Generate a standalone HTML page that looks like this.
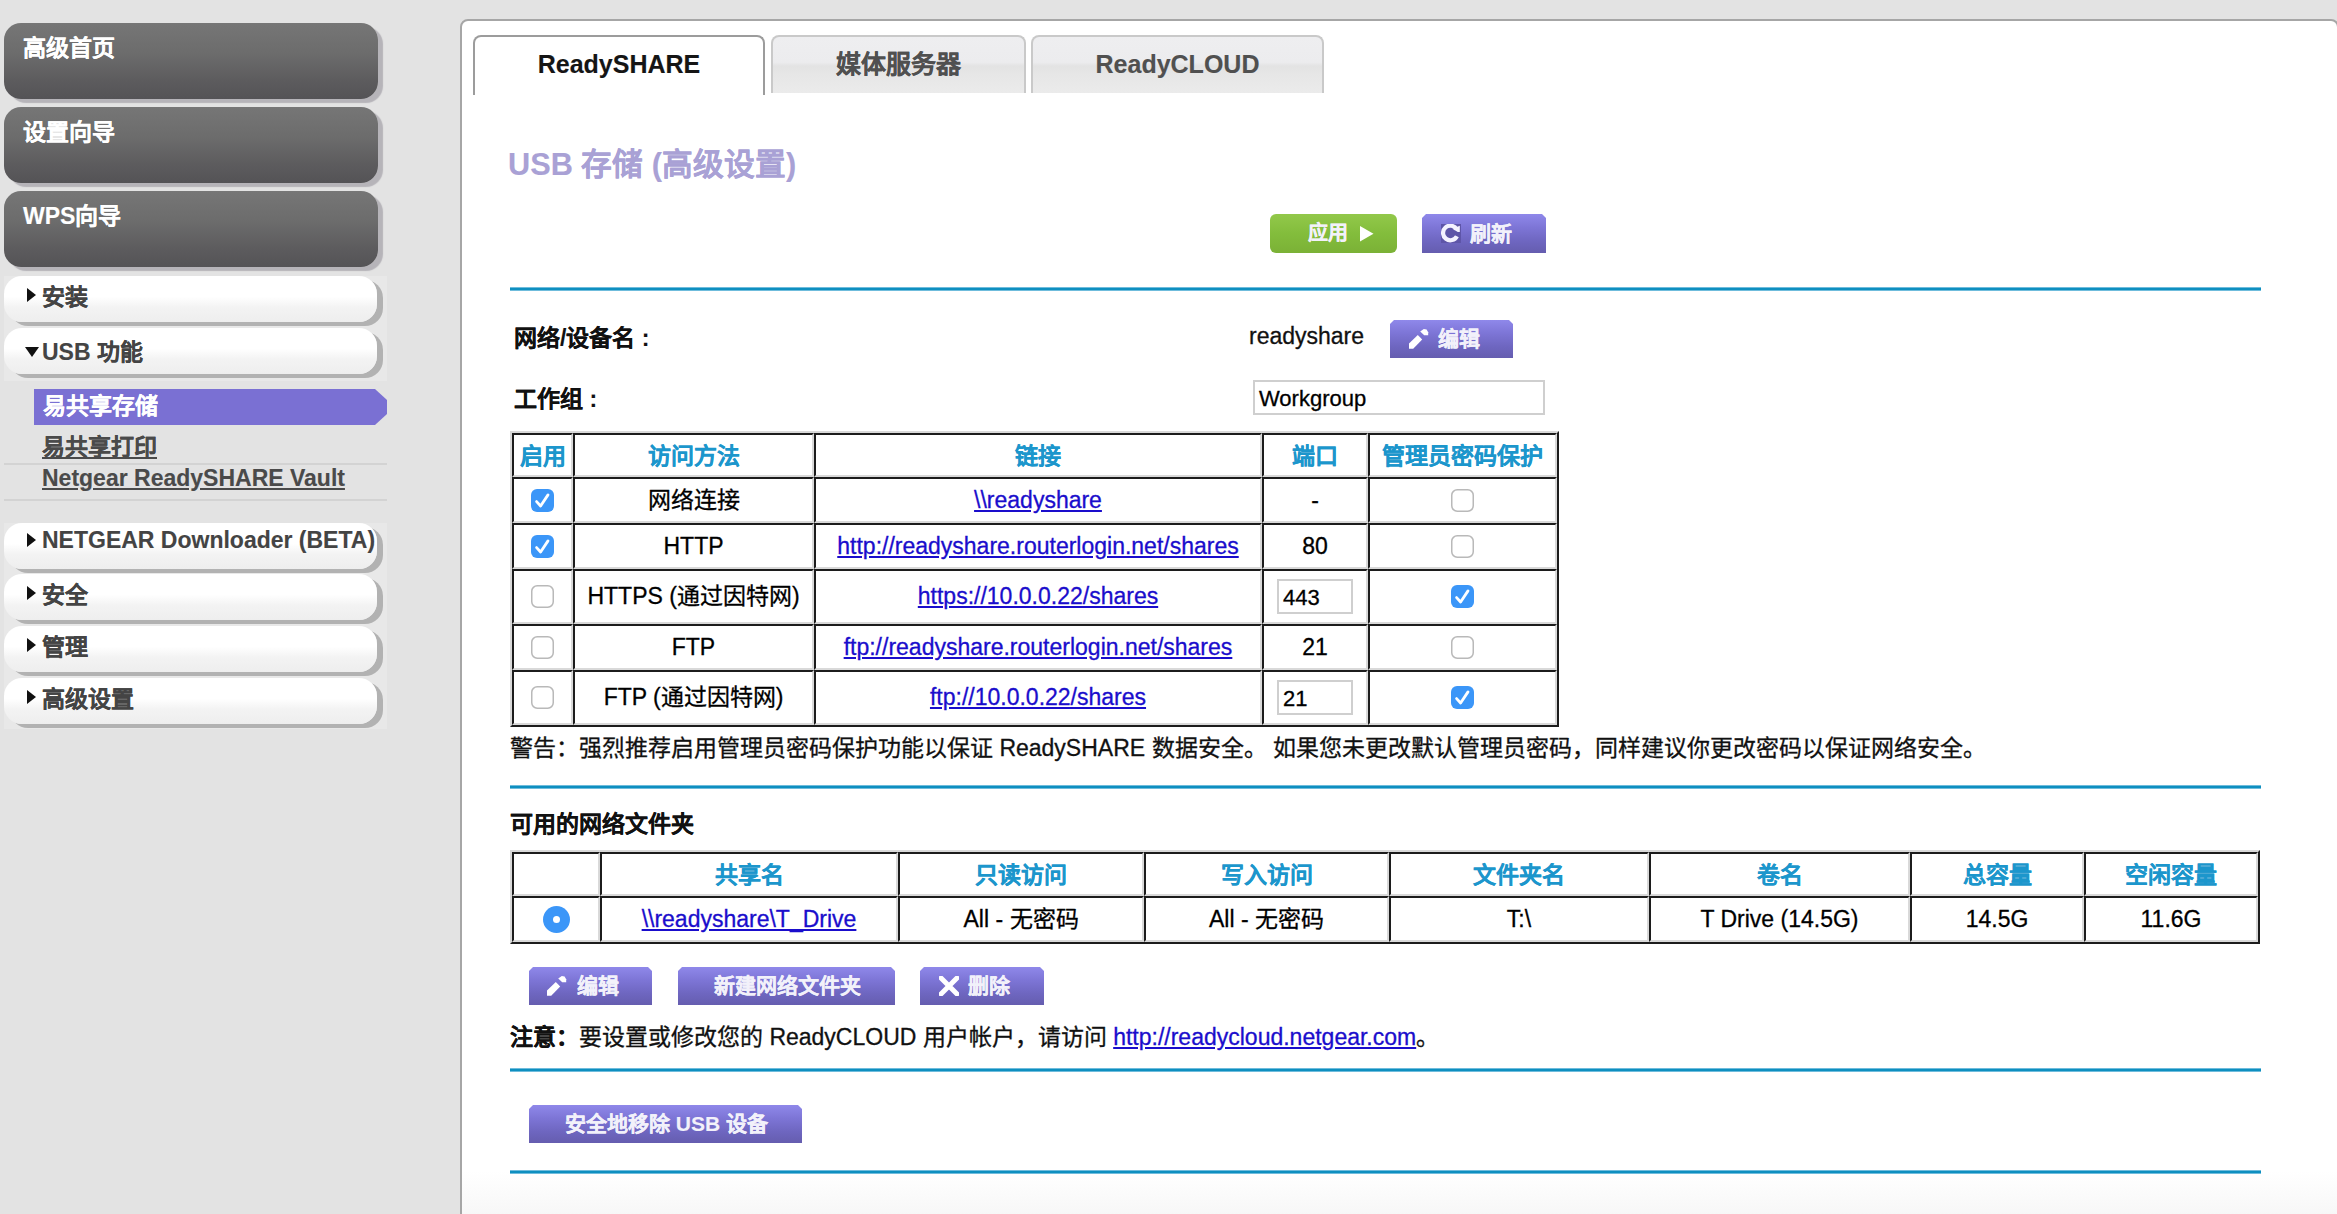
<!DOCTYPE html>
<html lang="zh-CN"><head><meta charset="utf-8">
<style>
*{box-sizing:border-box;margin:0;padding:0}
html,body{width:2337px;height:1214px;overflow:hidden;background:#e3e3e3;font-family:"Liberation Sans",sans-serif;}
body *{-webkit-text-stroke:0.3px currentColor}
.dk *,.lt *,.sub,.tab,.btn *,th,b,.a[style*="font-weight:bold"]{-webkit-text-stroke:0.12px currentColor}
.a{position:absolute;white-space:nowrap}
.dk{position:absolute;left:4px;width:374px;height:76px;border-radius:17px;background:linear-gradient(#767676 0%,#6c6c6c 40%,#5d5c5e 75%,#545356 100%);box-shadow:5px 4px 1px #b6b4b9;color:#fff;font-weight:bold;font-size:23px;}
.dk span{position:absolute;left:19px;top:6px;}
.lbg{position:absolute;left:4px;width:383px;background:#e8e8e8}
.lt{position:absolute;left:4px;width:373px;height:46px;border-radius:18px;background:linear-gradient(#fff 0%,#fff 45%,#f3f3f3 68%,#eeeeee 100%);box-shadow:6px 4px 0 #b2b2b2;color:#444;font-weight:bold;font-size:23px;}
.lt span{position:absolute;left:38px;top:2px;white-space:nowrap}
.tri{position:absolute;left:23px;top:12px;width:0;height:0;border-top:7px solid transparent;border-bottom:7px solid transparent;border-left:9px solid #111}
.trid{position:absolute;left:21px;top:19px;width:0;height:0;border-left:7px solid transparent;border-right:7px solid transparent;border-top:10px solid #111}
.sub{position:absolute;left:42px;color:#4a4a4a;font-weight:bold;font-size:23px;text-decoration:underline;white-space:nowrap}
.sep{position:absolute;left:4px;width:383px;height:2px;background:#d3d3d3}
#panel{position:absolute;left:460px;top:19px;width:1879px;height:1300px;background:linear-gradient(#fff 0,#fff 1150px,#f7f7f7 1195px);border:2px solid #a6a6a6;border-radius:8px}
.tab{position:absolute;top:35px;border:2px solid #c9c9c9;border-bottom:none;border-radius:8px 8px 0 0;font-weight:bold;font-size:25px;text-align:center;line-height:54px;background:linear-gradient(#eeeef0 0%,#ececee 45%,#e3e3e3 52%,#e6e6e6 65%,#ebebeb 100%);color:#505050}
.bl{position:absolute;left:510px;width:1751px;height:4px;background:linear-gradient(#6fbcdc 0,#6fbcdc 25%,#0e8fc0 25%,#0e8fc0 75%,#6fbcdc 75%)}
.btn{position:absolute;height:38px;color:#f2f1fa;font-weight:bold;font-size:21px;background:linear-gradient(#8f88ea 0%,#7d75d6 35%,#6e66c0 70%,#655daf 100%);clip-path:polygon(0 4px,4px 0,calc(100% - 4px) 0,100% 4px,100% 100%,0 100%)}
.btn span{position:absolute;top:2px}
.btng{background:linear-gradient(#92c84a 0%,#83bd3c 50%,#7bb136 100%);border-radius:6px;clip-path:none}
table.t{position:absolute;border-collapse:separate;border-spacing:0;border:2px solid;border-color:#d9d9d9 #1c1c1c #1c1c1c #d9d9d9;table-layout:fixed}
table.t td,table.t th{border:2px solid;border-color:#1c1c1c #d9d9d9 #d9d9d9 #1c1c1c;text-align:center;font-size:23px;line-height:26px;padding:0 0 3px 0;vertical-align:middle}
table.t td{color:#000;font-weight:normal;padding-bottom:1px}
table.t th{color:#1c96cc;font-weight:bold;padding-bottom:0;padding-top:2px}
a.lk{color:#1a0dcc;text-decoration:underline}
.cb{display:inline-block;width:23px;height:23px;vertical-align:middle;position:relative;top:-1px}
.rad{display:inline-block;width:27px;height:27px;border-radius:50%;background:#3b96f8;position:relative;vertical-align:middle}
.rad:after{content:"";position:absolute;left:10px;top:10px;width:7px;height:7px;border-radius:50%;background:#fff}
.inp{position:absolute;border:2px solid #cfcfcf;background:#fff;font-size:22px;color:#000}
</style></head><body>
<div class="dk" style="top:23px"><span>高级首页</span></div>
<div class="dk" style="top:107px"><span>设置向导</span></div>
<div class="dk" style="top:191px"><span>WPS向导</span></div>

<div class="lbg" style="top:276px;height:105px"></div>
<div class="lt" style="top:276px"><i class="tri"></i><span>安装</span></div>
<div class="lt" style="top:328px"><i class="trid"></i><span style="top:5px">USB 功能</span></div>

<div class="a" style="left:34px;top:389px;width:353px;height:36px;background:#7a70d3;clip-path:polygon(0 0,341px 0,353px 11px,353px 25px,341px 36px,0 36px)"></div>
<div class="a" style="left:43px;top:387px;color:#fff;font-weight:bold;font-size:23px">易共享存储</div>
<div class="sub" style="top:428px">易共享打印</div>
<div class="sep" style="top:463px"></div>
<div class="sub" style="top:465px">Netgear ReadySHARE Vault</div>
<div class="sep" style="top:499px"></div>

<div class="lbg" style="top:523px;height:206px"></div>
<div class="lt" style="top:523px"><i class="tri" style="top:10px"></i><span style="top:4px">NETGEAR Downloader (BETA)</span></div>
<div class="lt" style="top:574px"><i class="tri"></i><span>安全</span></div>
<div class="lt" style="top:626px"><i class="tri"></i><span>管理</span></div>
<div class="lt" style="top:678px"><i class="tri"></i><span>高级设置</span></div>

<div id="panel"></div>

<div class="tab" style="left:473px;width:292px;height:60px;background:#fff;color:#151515;border-color:#9c9c9c">ReadySHARE</div>
<div class="tab" style="left:771px;width:255px;height:58px">媒体服务器</div>
<div class="tab" style="left:1031px;width:293px;height:58px">ReadyCLOUD</div>

<div class="a" style="left:508px;top:139px;font-size:30.7px;font-weight:bold;color:#a9a1d5">USB 存储 (高级设置)</div>

<div class="btn btng" style="left:1270px;top:214px;width:127px;height:39px"><span style="left:38px;top:3px;font-size:20px">应用</span></div>
<svg class="a" style="left:1360px;top:226px" width="14" height="16" viewBox="0 0 14 16"><path d="M0 0 L13.5 7.8 L0 15.6 Z" fill="#fff"/></svg>
<div class="btn" style="left:1422px;top:214px;width:124px;height:39px"><span style="left:48px;top:3px">刷新</span></div>
<svg class="a" style="left:1441px;top:224px" width="20" height="19" viewBox="0 0 20 19"><rect width="20" height="19" fill="#5e55a8"/><path d="M15.6 5.2 A7.3 7.3 0 1 0 15.9 12.2" fill="none" stroke="#f4f2ff" stroke-width="4.2"/><path d="M11.5 4.8 L18.8 1.8 L18.8 9.3 Z" fill="#f4f2ff"/><rect x="11" y="8" width="9" height="3.2" fill="#5e55a8"/></svg>

<div class="bl" style="top:287px"></div>

<div class="a" style="left:514px;top:319px;font-size:23px;font-weight:bold;color:#111">网络/设备名 :</div>
<div class="a" style="left:1249px;top:323px;font-size:23px;color:#111">readyshare</div>
<div class="btn" style="left:1390px;top:320px;width:123px;height:38px"><span style="left:48px">编辑</span></div>
<svg class="a" style="left:1409px;top:329px" width="20" height="20" viewBox="0 0 20 20"><path d="M0 14.6 L8.8 6.0 L13.2 10.4 L4.2 19.8 L0 19.8 Z" fill="#fff"/><path d="M11.2 2.6 L14.8 0 L17.6 0.6 L19.2 3.2 L19.2 6.2 L15.2 6.2 Z" fill="#fff"/></svg>

<div class="a" style="left:514px;top:380px;font-size:23px;font-weight:bold;color:#111">工作组 :</div>
<div class="inp" style="left:1253px;top:380px;width:292px;height:35px;padding:4px 4px">Workgroup</div>

<table class="t" style="left:510px;top:431px;width:1049px">
<colgroup><col style="width:61px"><col style="width:241px"><col style="width:448px"><col style="width:106px"><col style="width:189px"></colgroup>
<tr style="height:44px"><th>启用</th><th>访问方法</th><th>链接</th><th>端口</th><th>管理员密码保护</th></tr>
<tr style="height:46px"><td><svg class="cb" viewBox="0 0 23 23"><rect x="0" y="0" width="23" height="23" rx="6" fill="#3b96f8"/><path d="M5.6 12.6 L9.6 17 L17 5.9" fill="none" stroke="#fff" stroke-width="2.8" stroke-linecap="round" stroke-linejoin="round"/></svg></td><td>网络连接</td><td><a class="lk">\\readyshare</a></td><td>-</td><td><svg class="cb" viewBox="0 0 23 23"><rect x="0.75" y="0.75" width="21.5" height="21.5" rx="5.5" fill="#fff" stroke="#b9b9b9" stroke-width="1.5"/></svg></td></tr>
<tr style="height:46px"><td><svg class="cb" viewBox="0 0 23 23"><rect x="0" y="0" width="23" height="23" rx="6" fill="#3b96f8"/><path d="M5.6 12.6 L9.6 17 L17 5.9" fill="none" stroke="#fff" stroke-width="2.8" stroke-linecap="round" stroke-linejoin="round"/></svg></td><td>HTTP</td><td><a class="lk">http://readyshare.routerlogin.net/shares</a></td><td>80</td><td><svg class="cb" viewBox="0 0 23 23"><rect x="0.75" y="0.75" width="21.5" height="21.5" rx="5.5" fill="#fff" stroke="#b9b9b9" stroke-width="1.5"/></svg></td></tr>
<tr style="height:55px"><td><svg class="cb" viewBox="0 0 23 23"><rect x="0.75" y="0.75" width="21.5" height="21.5" rx="5.5" fill="#fff" stroke="#b9b9b9" stroke-width="1.5"/></svg></td><td>HTTPS (通过因特网)</td><td><a class="lk">https://10.0.0.22/shares</a></td><td></td><td><svg class="cb" viewBox="0 0 23 23"><rect x="0" y="0" width="23" height="23" rx="6" fill="#3b96f8"/><path d="M5.6 12.6 L9.6 17 L17 5.9" fill="none" stroke="#fff" stroke-width="2.8" stroke-linecap="round" stroke-linejoin="round"/></svg></td></tr>
<tr style="height:46px"><td><svg class="cb" viewBox="0 0 23 23"><rect x="0.75" y="0.75" width="21.5" height="21.5" rx="5.5" fill="#fff" stroke="#b9b9b9" stroke-width="1.5"/></svg></td><td>FTP</td><td><a class="lk">ftp://readyshare.routerlogin.net/shares</a></td><td>21</td><td><svg class="cb" viewBox="0 0 23 23"><rect x="0.75" y="0.75" width="21.5" height="21.5" rx="5.5" fill="#fff" stroke="#b9b9b9" stroke-width="1.5"/></svg></td></tr>
<tr style="height:55px"><td><svg class="cb" viewBox="0 0 23 23"><rect x="0.75" y="0.75" width="21.5" height="21.5" rx="5.5" fill="#fff" stroke="#b9b9b9" stroke-width="1.5"/></svg></td><td>FTP (通过因特网)</td><td><a class="lk">ftp://10.0.0.22/shares</a></td><td></td><td><svg class="cb" viewBox="0 0 23 23"><rect x="0" y="0" width="23" height="23" rx="6" fill="#3b96f8"/><path d="M5.6 12.6 L9.6 17 L17 5.9" fill="none" stroke="#fff" stroke-width="2.8" stroke-linecap="round" stroke-linejoin="round"/></svg></td></tr>
</table>
<div class="inp" style="left:1277px;top:579px;width:76px;height:35px;padding:4px 4px">443</div>
<div class="inp" style="left:1277px;top:680px;width:76px;height:35px;padding:4px 4px">21</div>

<div class="a" style="left:510px;top:729px;font-size:23px;color:#111">警告：强烈推荐启用管理员密码保护功能以保证 ReadySHARE 数据安全。 如果您未更改默认管理员密码，同样建议你更改密码以保证网络安全。</div>

<div class="bl" style="top:785px"></div>

<div class="a" style="left:510px;top:805px;font-size:23px;font-weight:bold;color:#111">可用的网络文件夹</div>

<table class="t" style="left:510px;top:850px;width:1750px">
<colgroup><col style="width:88px"><col style="width:298px"><col style="width:246px"><col style="width:245px"><col style="width:260px"><col style="width:261px"><col style="width:174px"><col style="width:174px"></colgroup>
<tr style="height:44px"><th></th><th>共享名</th><th>只读访问</th><th>写入访问</th><th>文件夹名</th><th>卷名</th><th>总容量</th><th>空闲容量</th></tr>
<tr style="height:46px"><td><i class="rad"></i></td><td><a class="lk">\\readyshare\T_Drive</a></td><td>All - 无密码</td><td>All - 无密码</td><td>T:\</td><td>T Drive (14.5G)</td><td>14.5G</td><td>11.6G</td></tr>
</table>

<div class="btn" style="left:529px;top:967px;width:123px;height:38px"><span style="left:48px">编辑</span></div>
<svg class="a" style="left:547px;top:976px" width="20" height="20" viewBox="0 0 20 20"><path d="M0 14.6 L8.8 6.0 L13.2 10.4 L4.2 19.8 L0 19.8 Z" fill="#fff"/><path d="M11.2 2.6 L14.8 0 L17.6 0.6 L19.2 3.2 L19.2 6.2 L15.2 6.2 Z" fill="#fff"/></svg>
<div class="btn" style="left:678px;top:967px;width:217px;height:38px"><span style="left:36px">新建网络文件夹</span></div>
<div class="btn" style="left:920px;top:967px;width:124px;height:38px"><span style="left:48px">删除</span></div>
<svg class="a" style="left:939px;top:976px" width="20" height="20" viewBox="0 0 20 20"><path d="M2 2 L18 18 M18 2 L2 18" stroke="#fff" stroke-width="5" stroke-linecap="square"/></svg>

<div class="a" style="left:510px;top:1018px;font-size:23px;color:#111"><b>注意：</b>要设置或修改您的 ReadyCLOUD 用户帐户，请访问 <a class="lk">http://readycloud.netgear.com</a>。</div>

<div class="bl" style="top:1068px"></div>
<div class="btn" style="left:529px;top:1105px;width:273px;height:38px"><span style="left:36px">安全地移除 USB 设备</span></div>
<div class="bl" style="top:1170px"></div>
</body></html>
